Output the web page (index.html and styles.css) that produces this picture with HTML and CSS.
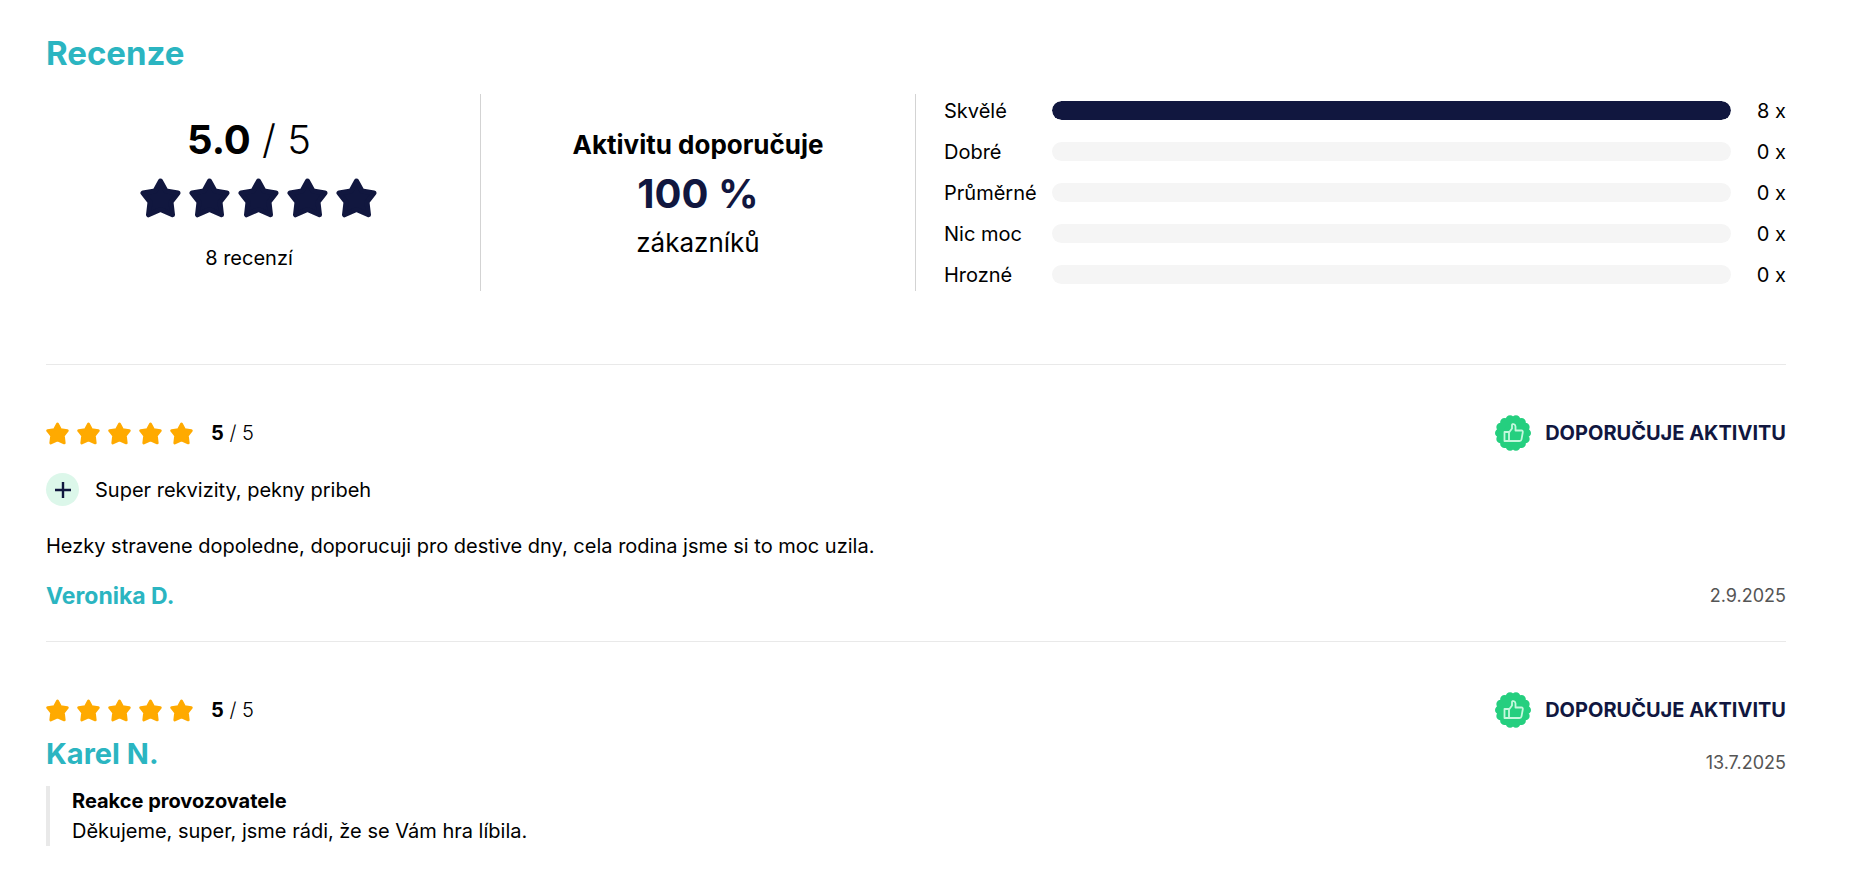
FILE: index.html
```html
<!DOCTYPE html>
<html lang="cs">
<head>
  <meta charset="utf-8">
  <meta name="viewport" content="width=device-width, initial-scale=1">
  <title>Recenze</title>
  <link rel="stylesheet" href="styles.css">
</head>
<body>
  <svg class="sprite" aria-hidden="true">
    <symbol id="star" viewBox="0 0 41 40">
      <path d="M20.5 3 L26 13 L38 15 L31 24 L32.5 36.8 L20.5 31.5 L8.5 36.8 L10 24 L3 15 L15 13 Z" fill="currentColor" stroke="currentColor" stroke-width="5" stroke-linejoin="round"/>
    </symbol>
    <symbol id="plus" viewBox="0 0 16 16">
      <path d="M8 0v16M0 8h16" stroke="currentColor" stroke-width="2.4" fill="none"/>
    </symbol>
    <symbol id="thumb" viewBox="0 0 36 36">
      <circle cx="18" cy="18" r="16" fill="#25cf7f"/>
      <circle cx="18" cy="18" r="13.6" fill="none" stroke="#25cf7f" stroke-width="8.8" stroke-linecap="round" pathLength="14" stroke-dasharray="0 1"/>
      <path d="M9.500 17h4.500v9h-4.500zM14 17.500l3-4V10c0-1.600 3.500-1.200 3.500 1.500V15.500h6c1 0 1.500.8 1.300 1.800l-1.300 7c-.2 1-1 1.700-2 1.700H14" fill="none" stroke="#c4f8dd" stroke-width="1.800" stroke-linejoin="round"/>
    </symbol>
  </svg>

  <section class="reviews">
    <h2 class="title">Recenze</h2>

    <div class="summary">
      <div class="summary-score">
        <div class="score"><strong>5.0</strong> / 5</div>
        <div class="stars stars-large">
          <svg><use href="#star"/></svg>
          <svg><use href="#star"/></svg>
          <svg><use href="#star"/></svg>
          <svg><use href="#star"/></svg>
          <svg><use href="#star"/></svg>
        </div>
        <div class="count">8 recenzí</div>
      </div>
      <div class="summary-recommend">
        <strong>Aktivitu doporučuje</strong>
        <strong class="percent">100 %</strong>
        <span>zákazníků</span>
      </div>
      <div class="summary-bars">
        <div class="bar-row">
          <span class="bar-label">Skvělé</span>
          <div class="bar"><div class="bar-fill" style="width: 100%"></div></div>
          <span class="bar-count">8 x</span>
        </div>
        <div class="bar-row">
          <span class="bar-label">Dobré</span>
          <div class="bar"><div class="bar-fill" style="width: 0%"></div></div>
          <span class="bar-count">0 x</span>
        </div>
        <div class="bar-row">
          <span class="bar-label">Průměrné</span>
          <div class="bar"><div class="bar-fill" style="width: 0%"></div></div>
          <span class="bar-count">0 x</span>
        </div>
        <div class="bar-row">
          <span class="bar-label">Nic moc</span>
          <div class="bar"><div class="bar-fill" style="width: 0%"></div></div>
          <span class="bar-count">0 x</span>
        </div>
        <div class="bar-row">
          <span class="bar-label">Hrozné</span>
          <div class="bar"><div class="bar-fill" style="width: 0%"></div></div>
          <span class="bar-count">0 x</span>
        </div>
      </div>
    </div>

    <article class="review">
      <div class="review-head">
        <div class="stars">
          <svg><use href="#star"/></svg>
          <svg><use href="#star"/></svg>
          <svg><use href="#star"/></svg>
          <svg><use href="#star"/></svg>
          <svg><use href="#star"/></svg>
        </div>
        <div class="rating"><strong>5</strong> / 5</div>
        <div class="recommend"><svg><use href="#thumb"/></svg>Doporučuje aktivitu</div>
      </div>
      <div class="plus">
        <span class="plus-icon"><svg><use href="#plus"/></svg></span>
        Super rekvizity, pekny pribeh
      </div>
      <p class="review-text">Hezky stravene dopoledne, doporucuji pro destive dny, cela rodina jsme si to moc uzila.</p>
      <div class="review-foot">
        <h4 class="author">Veronika D.</h4>
        <time class="date" datetime="2025-09-02">2.9.2025</time>
      </div>
    </article>

    <article class="review">
      <div class="review-head">
        <div class="stars">
          <svg><use href="#star"/></svg>
          <svg><use href="#star"/></svg>
          <svg><use href="#star"/></svg>
          <svg><use href="#star"/></svg>
          <svg><use href="#star"/></svg>
        </div>
        <div class="rating"><strong>5</strong> / 5</div>
        <div class="recommend"><svg><use href="#thumb"/></svg>Doporučuje aktivitu</div>
      </div>
      <div class="review-foot review-foot-short">
        <h3 class="author author-large">Karel N.</h3>
        <time class="date" datetime="2025-07-13">13.7.2025</time>
      </div>
      <div class="reply">
        <strong>Reakce provozovatele</strong>
        <p>Děkujeme, super, jsme rádi, že se Vám hra líbila.</p>
      </div>
    </article>
  </section>
</body>
</html>
```
FILE: styles.css
```css
* {
  box-sizing: border-box;
}

body {
  margin: 0;
  background: #fff;
  color: #000;
  font-family: Inter, "Open Sans", sans-serif;
  font-size: 20px;
  line-height: 30px;
}

h2, h3, h4, p {
  margin: 0;
}

.sprite {
  display: none;
}

.reviews {
  padding: 33px 65px 40px 46px;
}

.title {
  color: #2bb5c1;
  font-size: 33px;
  line-height: 40px;
  margin-bottom: 21px;
}

/* Summary */
.summary {
  display: grid;
  grid-template-columns: 1fr 1fr 2fr;
  height: 197px;
  margin-bottom: 73px;
}

.summary-score,
.summary-recommend {
  display: flex;
  flex-direction: column;
  align-items: center;
  border-right: 1px solid #d3d3d3;
}

.summary-score {
  padding: 21px 28px 0 0;
}

.score {
  font-size: 40px;
  line-height: 50px;
}

.score,
.rating {
  font-weight: 300;
}

.score strong,
.rating strong {
  font-weight: 700;
}

.stars {
  display: flex;
  gap: 8px;
  color: #ffaa00;
}

.stars svg {
  width: 23px;
  height: 23px;
}

.stars-large {
  color: #11173f;
  margin: 13px 0 25px;
  padding-left: 18px;
}

.stars-large svg {
  width: 41px;
  height: 40px;
}

.summary-recommend {
  padding-top: 26px;
  font-size: 26px;
  line-height: 49px;
}

.percent {
  color: #11173f;
  font-size: 40px;
}

.summary-bars {
  display: flex;
  flex-direction: column;
  justify-content: center;
  gap: 11px;
  padding-left: 28px;
}

.bar-row {
  display: flex;
  align-items: center;
}

.bar-label {
  width: 108px;
}

.bar {
  flex: 1;
  height: 19px;
  border-radius: 10px;
  background: #f5f5f5;
  overflow: hidden;
}

.bar-fill {
  height: 100%;
  border-radius: 10px;
  background: #11173f;
}

.bar-count {
  width: 55px;
  text-align: right;
}

/* Single review */
.review {
  border-top: 1px solid #e9e9e9;
  padding: 50px 0 30px;
}

.review-head {
  display: flex;
  align-items: center;
}

.rating {
  margin-left: 18px;
}

.recommend {
  display: flex;
  align-items: center;
  gap: 14px;
  margin-left: auto;
  color: #11173f;
  font-weight: 700;
  text-transform: uppercase;
}

.recommend svg {
  width: 36px;
  height: 36px;
}

.plus {
  display: flex;
  align-items: center;
  gap: 16px;
  margin-top: 22px;
}

.plus-icon {
  display: flex;
  align-items: center;
  justify-content: center;
  width: 33px;
  height: 33px;
  border-radius: 50%;
  background: #dcf7ea;
  color: #11173f;
}

.plus-icon svg {
  width: 16px;
  height: 16px;
}

.review-text {
  margin: 25px 0 20px;
}

.review-foot {
  display: flex;
  align-items: center;
  justify-content: space-between;
}

.review-foot-short {
  align-items: flex-end;
  padding-top: 8px;
}

.author {
  color: #2bb5c1;
  font-size: 23px;
  line-height: 30px;
}

.author-large {
  font-size: 29px;
  line-height: 36px;
  padding-bottom: 6px;
}

.date {
  color: #555;
  font-size: 18px;
}

.reply {
  border-left: 4px solid #e9e9e9;
  padding-left: 22px;
  margin-top: 8px;
}
```
